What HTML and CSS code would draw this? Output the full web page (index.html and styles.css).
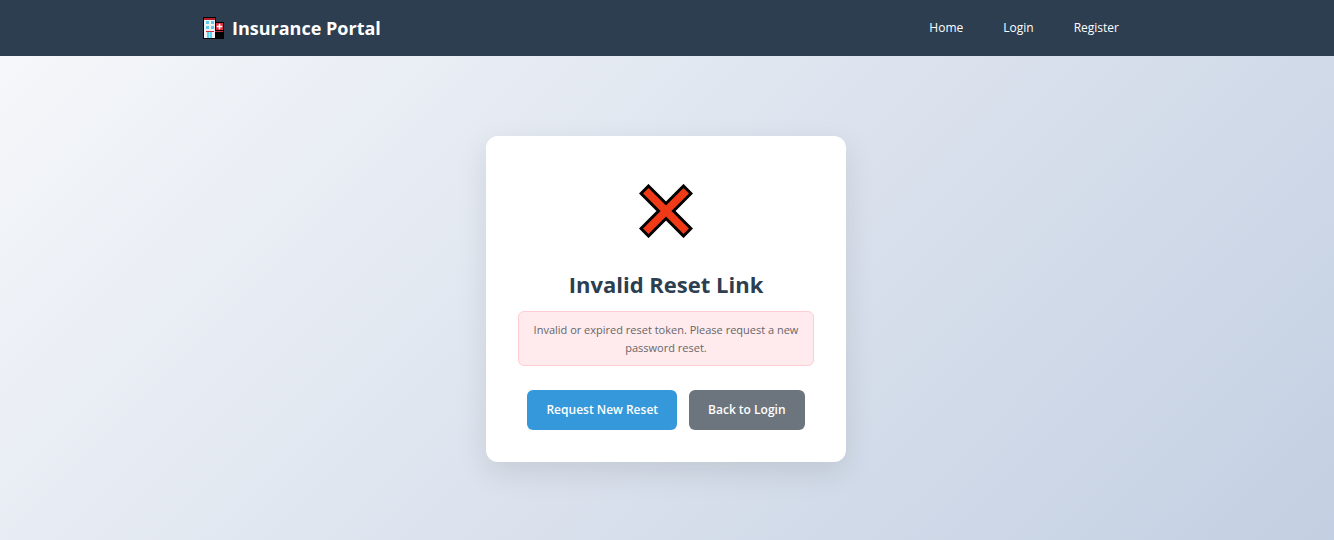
FILE: index.html
```html
<!DOCTYPE html>
<html lang="en">
<head>
<meta charset="utf-8">
<meta name="viewport" content="width=device-width, initial-scale=1">
<title>Insurance Portal</title>
<link rel="stylesheet" href="styles.css">
</head>
<body>
<header class="site-header">
  <div class="header-inner">
    <a class="brand" href="#">
      <svg class="brand-icon" viewBox="0 0 22 22" aria-hidden="true">
        <path d="M0 0H13V5H21V22H0Z" fill="#000"/>
        <path d="M1 3H12V21H1Z" fill="#f1f1f1"/>
        <path d="M1 1H12V3H1Z" fill="#b51f2b"/>
        <path d="M3 4H6V7H3ZM8 4H11V7H8ZM3 9H6V12H3ZM8 9H11V12H8Z" fill="#5ccbe9"/>
        <path d="M3 14H11V15H3Z" fill="#d8283a"/>
        <path d="M4 15H9V21H4Z" fill="#58d2f0"/>
        <path d="M6 15H7V21H6Z" fill="#a8e6f4"/>
        <path d="M13 6H20V13H13Z" fill="#dd3445"/>
        <path d="M16 7H17V9H19V10H17V12H16V10H14V9H16Z" fill="#fff" stroke="#fff" stroke-width=".5"/>
        <path d="M12 14H20V15H12Z" fill="#c82939"/>
      </svg>
      <span>Insurance Portal</span>
    </a>
    <nav class="site-nav">
      <a href="#">Home</a>
      <a href="#">Login</a>
      <a href="#">Register</a>
    </nav>
  </div>
</header>
<main class="page">
  <section class="card">
    <svg class="error-icon" viewBox="0 0 54 54" aria-hidden="true">
      <path d="M9.500 2 27 19.500 44.500 2 52 9.500 34.500 27 52 44.500 44.500 52 27 34.500 9.500 52 2 44.500 19.500 27 2 9.500Z" fill="#f03a17" stroke="#000" stroke-width="3"/>
    </svg>
    <h1 class="title">Invalid Reset Link</h1>
    <p class="message">Invalid or expired reset token. Please request a new password reset.</p>
    <div class="actions">
      <a class="button button-primary" href="#">Request New Reset</a>
      <a class="button button-secondary" href="#">Back to Login</a>
    </div>
  </section>
</main>
</body>
</html>
```

FILE: styles.css
```css
* {
  box-sizing: border-box;
}

body {
  display: flex;
  flex-direction: column;
  min-height: 100vh;
  margin: 0;
  font-family: "Segoe UI", "Open Sans", "Noto Sans", sans-serif;
}

a {
  color: inherit;
  text-decoration: none;
}

.site-header {
  background: #2c3e50;
  color: #fff;
}

.header-inner {
  display: flex;
  align-items: center;
  justify-content: space-between;
  max-width: 960px;
  min-height: 56px;
  margin: 0 auto;
  padding: 0 16px;
}

.brand {
  display: flex;
  align-items: center;
  gap: 7px;
  font-size: 18px;
  line-height: 24px;
  font-weight: 700;
}

.brand-icon {
  width: 22px;
  height: 22px;
}

.site-nav {
  display: flex;
  gap: 40px;
  padding-right: 12px;
  font-size: 12px;
  line-height: 20px;
}

.page {
  display: flex;
  flex: 1;
  justify-content: center;
  align-items: flex-start;
  padding: 80px 18px 78px 16px;
  background: linear-gradient(135deg, #f5f7fa 0%, #c3cfe2 100%);
}

.card {
  width: 100%;
  max-width: 360px;
  padding: 48px 32px 32px;
  border-radius: 12px;
  background: #fff;
  box-shadow: 0 10px 30px rgba(0, 0, 0, 0.1);
  text-align: center;
}

.error-icon {
  display: block;
  width: 54px;
  height: 54px;
  margin: 0 auto 30px;
}

.title {
  margin: 0 0 11px;
  color: #2c3e50;
  font-size: 22px;
  line-height: 32px;
  font-weight: 700;
}

.message {
  margin: 0 0 24px;
  padding: 9px 12px 8px;
  border: 1px solid #ffcdd2;
  border-radius: 6px;
  background: #ffebee;
  color: #666;
  font-size: 11px;
  line-height: 18px;
}

.actions {
  display: flex;
  flex-wrap: wrap;
  justify-content: center;
  gap: 12px;
}

.button {
  padding: 10px 19px;
  border-radius: 6px;
  color: #fff;
  font-size: 12px;
  line-height: 20px;
  font-weight: 600;
}

.button-primary {
  background: #3498db;
}

.button-secondary {
  background: #6c757d;
}
```
